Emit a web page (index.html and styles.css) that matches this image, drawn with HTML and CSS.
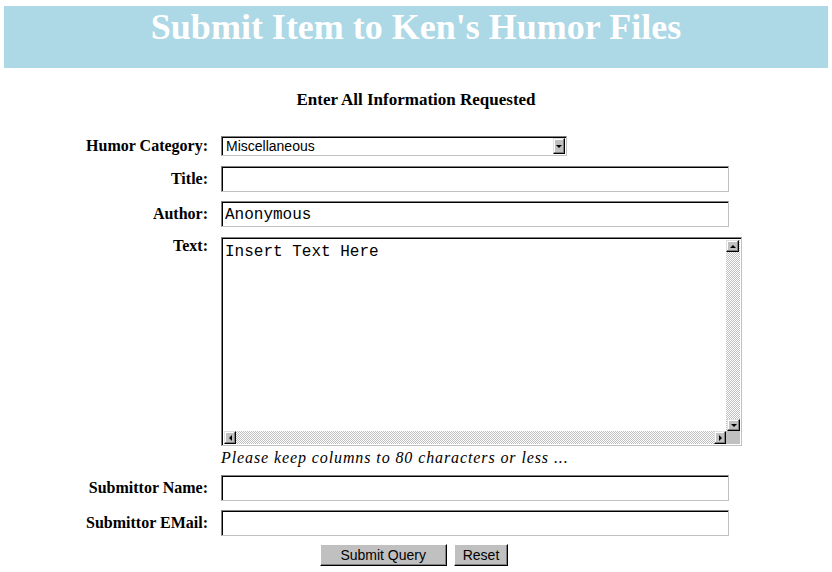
FILE: index.html
```html
<!DOCTYPE html>
<html lang="en">
<head>
  <meta charset="UTF-8">
  <title>Submit Item to Ken's Humor Files</title>
  <link rel="stylesheet" href="styles.css">
</head>
<body>

<div class="banner">
  <h1>Submit Item to Ken's Humor Files</h1>
</div>

<p class="intro">Enter All Information Requested</p>

<form class="submit-form" onsubmit="return false">
  <div class="fields">
    <label class="label" for="category">Humor Category:</label>
    <div class="select">
      <select id="category">
        <option>Miscellaneous</option>
        <option>Computers</option>
        <option>Lawyers</option>
        <option>Politics</option>
      </select>
      <span class="btn3d drop"><span class="tri down"></span></span>
    </div>

    <label class="label" for="title">Title:</label>
    <input class="field" type="text" id="title">

    <label class="label" for="author">Author:</label>
    <input class="field" type="text" id="author" value="Anonymous">

    <label class="label top" for="body">Text:</label>
    <div class="text-cell">
      <div class="textbox">
        <textarea id="body" wrap="off">Insert Text Here</textarea>
        <div class="vbar">
          <span class="btn3d arrow"><span class="tri up"></span></span>
          <span class="btn3d arrow end"><span class="tri down"></span></span>
        </div>
        <div class="hbar">
          <span class="btn3d arrow"><span class="tri left"></span></span>
          <span class="btn3d arrow end"><span class="tri right"></span></span>
        </div>
        <div class="corner"></div>
      </div>
      <p class="note">Please keep columns to 80 characters or less ...</p>
    </div>

    <label class="label" for="subname">Submittor Name:</label>
    <input class="field" type="text" id="subname">

    <label class="label" for="submail">Submittor EMail:</label>
    <input class="field" type="text" id="submail">
  </div>

  <div class="actions">
    <button type="submit" class="push wide">Submit Query</button>
    <button type="reset" class="push">Reset</button>
  </div>
</form>

</body>
</html>
```

FILE: styles.css
```css
body {
  margin: 0;
  font-family: "Liberation Serif", serif;
  background: #fff;
  color: #000;
}

.banner {
  margin: 6px 4px 0;
  height: 62px;
  background: #add8e6;
  text-align: center;
}

.banner h1 {
  margin: 0;
  font-size: 36px;
  font-weight: bold;
  color: #fff;
}

.intro {
  margin: 22px 0 0;
  text-align: center;
  font-size: 17px;
  font-weight: bold;
}

.fields {
  display: grid;
  grid-template-columns: 124px 521px;
  column-gap: 13px;
  row-gap: 9px;
  align-items: center;
  padding-left: 84px;
  margin-top: 26px;
}

.label {
  text-align: right;
  font-size: 16px;
  line-height: 17px;
  font-weight: bold;
  white-space: nowrap;
  padding-bottom: 2px;
}

.label.top {
  align-self: start;
  padding: 1px 0 0;
}

/* sunken win95 style boxes */
.field,
.select,
.textbox {
  box-sizing: border-box;
  border: 1px solid;
  border-color: #808080 #c0c0c0 #c0c0c0 #808080;
  box-shadow: inset 1px 1px 0 #000;
  background: #fff;
}

.field {
  width: 508px;
  height: 26px;
  padding: 2px 3px 0;
  font: 16px "Liberation Mono", monospace;
  outline: none;
}

.select {
  display: flex;
  align-items: center;
  align-self: start;
  width: 346px;
  height: 20px;
  margin-bottom: 1px;
  padding: 1px 1px 1px 2px;
}

.select select {
  flex: 1;
  height: 100%;
  appearance: none;
  border: 0;
  background: transparent;
  padding: 0 2px;
  font: 14px "Liberation Sans", sans-serif;
  color: #000;
  outline: none;
}

.btn3d {
  box-sizing: border-box;
  display: flex;
  align-items: center;
  justify-content: center;
  background: #c0c0c0;
  border: 1px solid;
  border-color: #dfdfdf #000 #000 #dfdfdf;
  box-shadow: inset -1px -1px 0 #808080, inset 1px 1px 0 #fff;
}

.drop {
  width: 12px;
  height: 16px;
}

.tri {
  width: 0;
  height: 0;
}

.tri.down {
  border-left: 3px solid transparent;
  border-right: 3px solid transparent;
  border-top: 3px solid #000;
}

.tri.up {
  border-left: 3px solid transparent;
  border-right: 3px solid transparent;
  border-bottom: 3px solid #000;
}

.tri.left {
  border-top: 3px solid transparent;
  border-bottom: 3px solid transparent;
  border-right: 3px solid #000;
}

.tri.right {
  border-top: 3px solid transparent;
  border-bottom: 3px solid transparent;
  border-left: 3px solid #000;
}

.text-cell {
  display: flex;
  flex-direction: column;
}

.textbox {
  display: grid;
  grid-template-columns: 1fr 14px;
  grid-template-rows: 1fr 13px;
  width: 521px;
  height: 209px;
  margin-top: 1px;
  padding: 2px 1px 1px 2px;
}

.textbox textarea {
  border: 0;
  resize: none;
  overflow: hidden;
  padding: 3px 1px;
  font: 16px "Liberation Mono", monospace;
  color: #000;
  outline: none;
}

.vbar,
.hbar {
  display: flex;
  background: repeating-conic-gradient(#c0c0c0 0 25%, #fff 0 50%) 0 0 / 2px 2px;
}

.vbar {
  flex-direction: column;
}

.vbar .arrow {
  width: 13px;
  height: 12px;
}

.hbar .arrow {
  width: 12px;
  height: 13px;
}

.arrow.end {
  margin: auto 0 0 auto;
}

.corner {
  background: #c0c0c0;
}

.note {
  margin: 4px 0 0;
  font-size: 16px;
  font-style: italic;
  line-height: 16px;
  letter-spacing: 0.9px;
}

.actions {
  display: flex;
  justify-content: center;
  gap: 7px;
  margin-top: 8px;
  padding-right: 4px;
}

.push {
  height: 22px;
  padding: 0 8px;
  background: #c0c0c0;
  border: 1px solid;
  border-color: #fff #000 #000 #fff;
  box-shadow: inset -1px -1px 0 #808080;
  font: 14px "Liberation Sans", sans-serif;
  color: #000;
}

.push.wide {
  width: 127px;
}
```
